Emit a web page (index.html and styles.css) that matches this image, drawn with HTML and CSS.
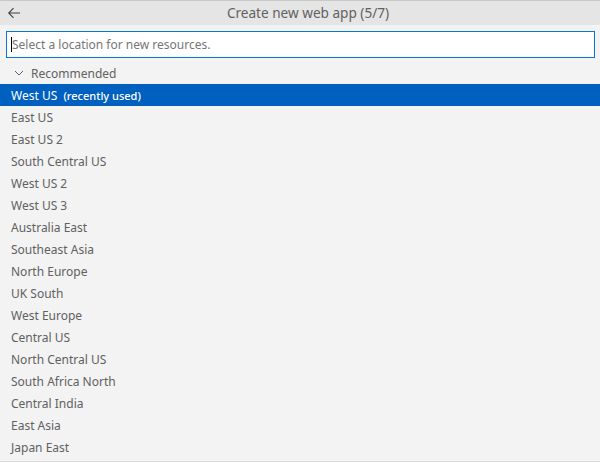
FILE: index.html
```html
<!DOCTYPE html>
<html>
<head>
<meta charset="utf-8">
<link rel="stylesheet" href="styles.css">
</head>
<body>
<div class="widget">
  <div class="titlebar">
    <span class="back">
      <svg width="16" height="16" viewBox="0 0 16 16"><path d="M14 8H2.8M7.5 3.2L2.7 8l4.8 4.8" fill="none" stroke="#424242" stroke-width="1.1"/></svg>
    </span>
    <span class="title">Create new web app (5/7)</span>
  </div>
  <div class="inputwrap">
    <div class="input"><span class="caret"></span><span class="ph">Select a location for new resources.</span></div>
  </div>
  <div class="group">
    <svg class="chev" width="12" height="12" viewBox="0 0 12 12"><path d="M2 4l4 4 4-4" fill="none" stroke="#616161" stroke-width="1"/></svg>
    <span>Recommended</span>
  </div>
  <ul class="list">
    <li class="item selected">West US <span class="desc">(recently used)</span></li>
    <li class="item">East US</li>
    <li class="item">East US 2</li>
    <li class="item">South Central US</li>
    <li class="item">West US 2</li>
    <li class="item">West US 3</li>
    <li class="item">Australia East</li>
    <li class="item">Southeast Asia</li>
    <li class="item">North Europe</li>
    <li class="item">UK South</li>
    <li class="item">West Europe</li>
    <li class="item">Central US</li>
    <li class="item">North Central US</li>
    <li class="item">South Africa North</li>
    <li class="item">Central India</li>
    <li class="item">East Asia</li>
    <li class="item">Japan East</li>
  </ul>
</div>
</body>
</html>
```
FILE: styles.css
```css
html, body {
  margin: 0;
  padding: 0;
  background: #f3f3f3;
  overflow: hidden;
}
body {
  font-family: "Noto Sans", "Open Sans", sans-serif;
  font-size: 12px;
  color: #616161;
}
.widget {
  width: 600px;
  height: 462px;
  border-top: 1px solid #c8c8c8;
  border-bottom: 1px solid #dcdcdc;
  box-sizing: border-box;
  overflow: hidden;
  background: #f3f3f3;
}
.titlebar {
  height: 24px;
  background: #e5e5e5;
  display: flex;
  align-items: center;
  justify-content: center;
  position: relative;
}
.back {
  position: absolute;
  left: 6px;
  top: 4px;
  width: 16px;
  height: 16px;
  display: flex;
}
.title {
  color: #616161;
  font-size: 13.6px;
  line-height: 24px;
  margin-left: 16px;
}
.inputwrap {
  padding: 6px 5px 4px 6px;
}
.input {
  height: 25px;
  background: #fff;
  border: 1px solid #0078d4;
  display: flex;
  align-items: center;
  padding-left: 4px;
}
.caret {
  width: 1px;
  height: 15px;
  background: #000;
}
.ph {
  color: #767676;
  font-size: 12px;
}
.group {
  height: 22px;
  display: flex;
  align-items: center;
  padding-left: 13px;
  gap: 6px;
  color: #616161;
}
.list {
  list-style: none;
  margin: 0;
  padding: 0;
}
.item {
  height: 21px;
  padding-top: 1px;
  line-height: 22px;
  padding-left: 11px;
  color: #616161;
  white-space: nowrap;
}
.item.selected {
  background: #0060c0;
  color: #fff;
}
.desc {
  font-size: 11px;
  margin-left: 3px;
  font-weight: 500;
}
```
